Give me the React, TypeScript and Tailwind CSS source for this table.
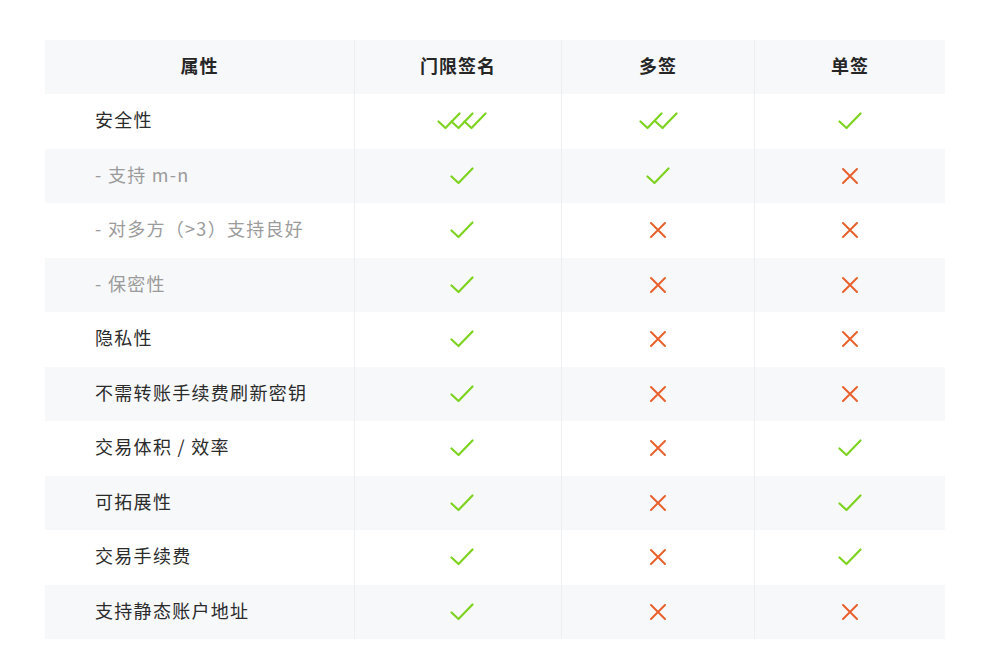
import React from "react";

type Mark = "c3" | "c2" | "c" | "x";

const rows: { label: string; sub?: boolean; v: [Mark, Mark, Mark] }[] = [
  { label: "安全性", v: ["c3", "c2", "c"] },
  { label: "- 支持 m-n", sub: true, v: ["c", "c", "x"] },
  { label: "- 对多方（>3）支持良好", sub: true, v: ["c", "x", "x"] },
  { label: "- 保密性", sub: true, v: ["c", "x", "x"] },
  { label: "隐私性", v: ["c", "x", "x"] },
  { label: "不需转账手续费刷新密钥", v: ["c", "x", "x"] },
  { label: "交易体积 / 效率", v: ["c", "x", "c"] },
  { label: "可拓展性", v: ["c", "x", "c"] },
  { label: "交易手续费", v: ["c", "x", "c"] },
  { label: "支持静态账户地址", v: ["c", "x", "x"] },
];

function Checks({ n }: { n: number }) {
  const offs = n === 3 ? [0, 13, 26] : n === 2 ? [0, 15] : [0];
  const w = 24 + offs[offs.length - 1];
  return (
    <svg width={w} height={20} viewBox={`0 0 ${w} 20`} fill="none">
      {offs.map((o) => (
        <polyline
          key={o}
          points={`${o + 1.5},10.5 ${o + 8.5},17 ${o + 22.5},2.5`}
          stroke="#7ed321"
          strokeWidth={2.2}
          strokeLinecap="round"
          strokeLinejoin="round"
        />
      ))}
    </svg>
  );
}

function Cross() {
  return (
    <svg width={18} height={18} viewBox="0 0 18 18" fill="none">
      <path d="M2 2 L16 16 M16 2 L2 16" stroke="#e8612c" strokeWidth={2} strokeLinecap="round" />
    </svg>
  );
}

function Cell({ m }: { m: Mark }) {
  if (m === "x") return <Cross />;
  return <Checks n={m === "c3" ? 3 : m === "c2" ? 2 : 1} />;
}

export default function App() {
  const font = { fontFamily: '"Noto Sans CJK SC", "Noto Sans", sans-serif' };
  return (
    <div className="w-[981px] h-[670px] bg-white pt-[40px] pl-[45px]" style={font}>
      <div className="w-[900px]">
        <div className="grid grid-cols-[310px_207px_193px_190px] h-[54px] bg-[#f7f8fa] text-[18px] font-bold text-[#262626] tracking-[1px]">
          <div className="flex items-center justify-center pb-[4px] border-r border-[#eceef1]">属性</div>
          <div className="flex items-center justify-center pb-[4px] border-r border-[#eceef1]">门限签名</div>
          <div className="flex items-center justify-center pb-[4px] border-r border-[#eceef1]">多签</div>
          <div className="flex items-center justify-center pb-[4px]">单签</div>
        </div>
        {rows.map((r, i) => (
          <div
            key={i}
            className={`grid grid-cols-[310px_207px_193px_190px] h-[54.5px] ${i % 2 === 1 ? "bg-[#f7f8fa]" : "bg-white"}`}
          >
            <div
              className={`flex items-center pl-[50px] pb-[3px] text-[18px] tracking-[1.3px] border-r border-[#eceef1] ${r.sub ? "text-[#9b9b9b]" : "text-[#2b2b2b]"}`}
            >
              {r.label}
            </div>
            <div className="flex items-center justify-center pl-[8px] border-r border-[#eceef1]">
              <Cell m={r.v[0]} />
            </div>
            <div className="flex items-center justify-center border-r border-[#eceef1]">
              <Cell m={r.v[1]} />
            </div>
            <div className="flex items-center justify-center">
              <Cell m={r.v[2]} />
            </div>
          </div>
        ))}
      </div>
    </div>
  );
}
